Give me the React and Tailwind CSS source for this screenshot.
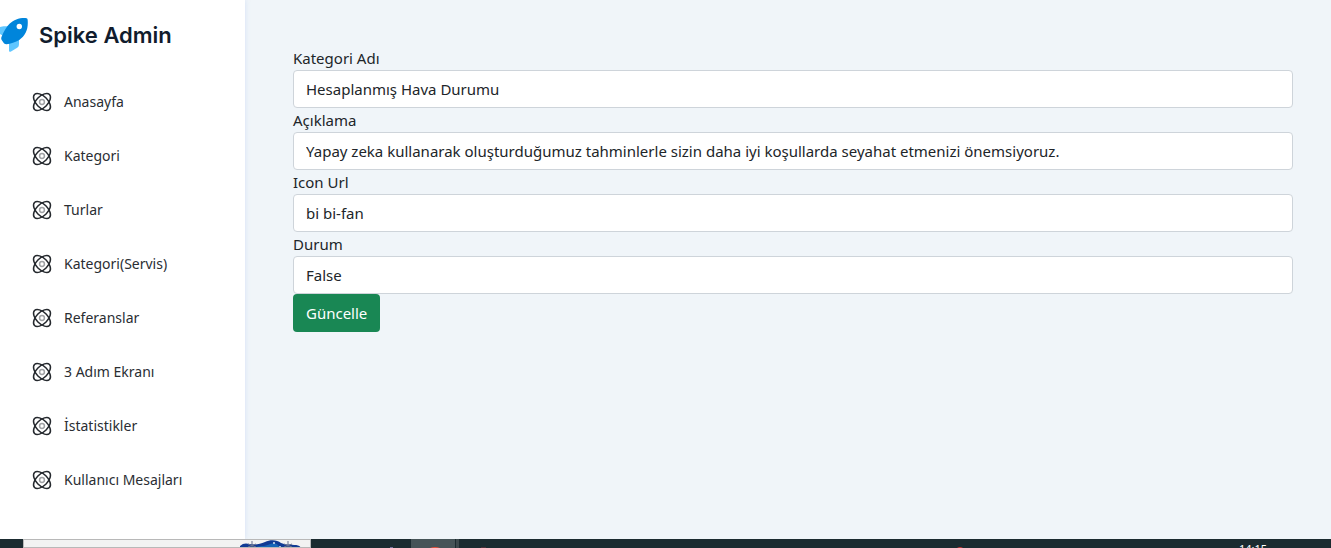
import React from "react";

const menu = [
  "Anasayfa",
  "Kategori",
  "Turlar",
  "Kategori(Servis)",
  "Referanslar",
  "3 Adım Ekranı",
  "İstatistikler",
  "Kullanıcı Mesajları",
];

const fields = [
  { id: "name", label: "Kategori Adı", value: "Hesaplanmış Hava Durumu" },
  {
    id: "description",
    label: "Açıklama",
    value:
      "Yapay zeka kullanarak oluşturduğumuz tahminlerle sizin daha iyi koşullarda seyahat etmenizi önemsiyoruz.",
  },
  { id: "icon", label: "Icon Url", value: "bi bi-fan" },
  { id: "status", label: "Durum", value: "False" },
];

function AtomIcon() {
  return (
    <svg className="size-5 shrink-0" viewBox="0 0 24 24" fill="none" aria-hidden="true">
      <g stroke="#25292e" strokeWidth="1.8">
        <path d="M21 3C23.500 5.500 21.800 12 16.900 16.900C12 21.800 5.500 23.500 3 21C.5 18.500 2.200 12 7.100 7.100C12 2.200 18.500 .5 21 3Z" />
        <path d="M3 3C.5 5.500 2.200 12 7.100 16.900C12 21.800 18.500 23.500 21 21C23.500 18.500 21.800 12 16.900 7.100C12 2.200 5.500 .5 3 3Z" />
      </g>
      <circle cx="12" cy="12" r="2.900" stroke="#a0a2a5" strokeWidth="1.800" />
    </svg>
  );
}

function Rocket() {
  return (
    <svg className="h-9 w-7 shrink-0" viewBox="0 0 28 36" aria-hidden="true">
      <path d="M0 10C2 9 5 9 9 9.300L4 19.500L0 17Z" fill="#5fc6ff" />
      <path d="M9 26L19 22.500V27C19 29 18.400 30 16.800 31L11 34.500C9.800 35.200 9 34.600 9 33.400Z" fill="#5fc6ff" />
      <path
        d="M25.500 1C27 1 27.700 1.700 27.700 3.200C28.400 12.500 25.500 18.500 19.300 23C15.500 25.200 10.500 27 6.500 27.300C5 27.400 4.200 26.700 3.400 25.600L1.700 23C1 21.800 1.100 20.800 1.800 19.300C4 14.300 6.500 9.500 9.500 6.800C14 2.500 19 .8 25.500 1Z"
        fill="#0085db"
      />
      <circle cx="19.300" cy="9.500" r="2.700" fill="#fff" />
    </svg>
  );
}

function Sidebar() {
  return (
    <aside className="w-[245px] shrink-0 bg-white shadow-[0_0_5px_rgba(160,185,240,0.35)]">
      <a
        href="#"
        className="flex h-[70px] items-center gap-[11px] font-['Inter',sans-serif] text-[22px] font-semibold text-[#111c2d]"
      >
        <Rocket />
        Spike Admin
      </a>
      <nav className="pt-[5px]">
        <ul>
          {menu.map((item) => (
            <li key={item}>
              <a href="#" className="flex h-[54px] items-center gap-3 px-8 text-sm text-[#2a2e33]">
                <AtomIcon />
                {item}
              </a>
            </li>
          ))}
        </ul>
      </nav>
    </aside>
  );
}

function Taskbar() {
  return (
    <footer className="flex h-[9px] shrink-0 overflow-hidden bg-[#1b2b30]">
      <div className="ml-[23px] flex w-[288px] justify-end overflow-hidden border border-[#b8b8b8] bg-[#f2f2f2] pr-2">
        <svg className="h-2 w-[62px]" viewBox="0 0 62 8" aria-hidden="true">
          <path d="M0 8V6C3 3 6 3 10 4C16 5 20 4 25 2C30-.5 37-.5 41 3C45 5 49 4 54 5C58 5 60 6 61 8Z" fill="#103a94" />
          <path d="M14 8C20 5 25 7 30 4C35 2 38 4 40 8Z" fill="#1765b8" />
          <path d="M12 1V8M8 4L16 7M16 4L8 7M48 1V8M44 4L52 7M52 4L44 7" stroke="#66708f" />
          <circle cx="34" cy="3" r="1" fill="#d7e4f5" />
          <circle cx="40" cy="7" r="1" fill="#d7e4f5" />
        </svg>
      </div>
      <svg className="h-[9px] w-[175px] shrink-0" viewBox="0 0 175 9" aria-hidden="true">
        <rect x="100" width="44" height="9" fill="#465458" />
        <rect x="145" width="3" height="9" fill="#3c494d" />
        <path d="M79 8H82V9H79Z" fill="#74719c" />
        <path d="M119 9Q124 7 129 9Z" fill="#e8503a" />
        <path d="M170 8H175V9H170Z" fill="#4a3038" />
      </svg>
      <div className="flex flex-1 justify-end pr-16">
        <svg className="mr-auto ml-[470px] h-[9px] w-2" viewBox="0 0 8 9" aria-hidden="true">
          <path d="M1 9Q4 7 7 9Z" fill="#c63838" />
        </svg>
        <time className="pt-1 text-[11px] leading-3 text-white">14:15</time>
      </div>
    </footer>
  );
}

export default function App() {
  return (
    <div className="flex h-screen flex-col overflow-hidden bg-[#f0f5f9] font-['Noto_Sans',sans-serif]">
      <div className="flex min-h-0 flex-1">
        <Sidebar />
        <main className="min-w-0 flex-1 pt-[46px] pr-[38px] pl-12">
          <form onSubmit={(e) => e.preventDefault()} className="text-[15px] leading-6 text-[#212529]">
            {fields.map((f) => (
              <div key={f.id}>
                <label htmlFor={f.id} className="block">
                  {f.label}
                </label>
                <input
                  id={f.id}
                  type="text"
                  defaultValue={f.value}
                  className="block h-[38px] w-full rounded border border-[#ced4da] bg-white px-3"
                />
              </div>
            ))}
            <button type="submit" className="block h-[38px] rounded bg-[#198754] px-[13px] text-white">
              Güncelle
            </button>
          </form>
        </main>
      </div>
      <Taskbar />
    </div>
  );
}
